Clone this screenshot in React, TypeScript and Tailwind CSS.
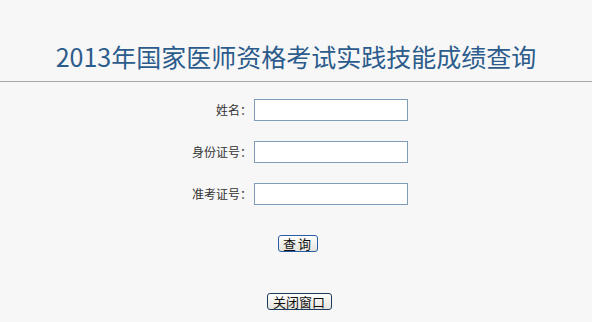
const FONT = '"Microsoft YaHei", "Noto Sans CJK SC", "Noto Sans", sans-serif'

const FIELDS = ['姓名：', '身份证号：', '准考证号：']

export default function App() {
  return (
    <div className="w-[592px] h-[322px] overflow-hidden bg-[#f7f7f7]" style={{ fontFamily: FONT }}>
      <div className="h-[82px] border-b border-[#a6a6a6] flex items-end justify-center pb-[10px]">
        <h1 className="text-[25px] leading-[30px] text-[#2c5c8c]">
          2013年国家医师资格考试实践技能成绩查询
        </h1>
      </div>

      <div className="flex flex-col items-center pt-[17px]">
        <div className="flex flex-col gap-[20px] mr-[14px]">
          {FIELDS.map(label => (
            <div key={label} className="flex items-center">
              <span className="w-[84px] text-right text-[12px] text-[#333] pr-[2px]">{label}</span>
              <input
                type="text"
                className="w-[154px] h-[22px] bg-white border border-[#7f9db9] outline-none"
              />
            </div>
          ))}
        </div>

        <div className="flex flex-col items-center ml-[5px]">
          <button className="mt-[30px] ml-[-1px] w-[40px] h-[17px] rounded-[3px] border border-[#2b5da8] bg-gradient-to-b from-white to-[#e4e3dc] text-[13px] leading-[15px] text-[#111] tracking-[2px]">
            查询
          </button>
          <button className="mt-[41px] ml-[1px] w-[65px] h-[17px] rounded-[3px] border border-[#1c3a5c] bg-gradient-to-b from-white to-[#e4e3dc] text-[13px] leading-[15px] text-[#111]">
            关闭窗口
          </button>
        </div>
      </div>
    </div>
  )
}
